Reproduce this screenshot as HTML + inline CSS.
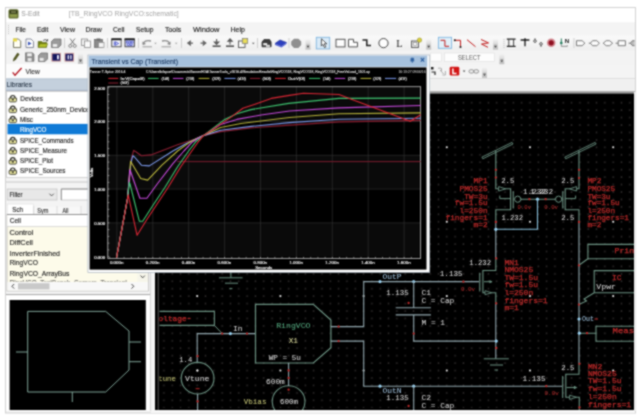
<!DOCTYPE html>
<html lang="en"><head><meta charset="utf-8"><title>S-Edit - TB_RingVCO RingVCO:schematic</title>
<style>
html,body{margin:0;padding:0;background:#fff}
body{width:640px;height:420px;overflow:hidden;position:relative}
svg{position:absolute;left:0;top:0;display:block}
text{white-space:pre}
</style></head><body>
<svg width="640" height="420" viewBox="0 0 640 420">
<defs><filter id="soft" x="0" y="0" width="640" height="420" filterUnits="userSpaceOnUse" color-interpolation-filters="sRGB"><feConvolveMatrix order="3" kernelMatrix="1 2 1 2 6 2 1 2 1" divisor="18" edgeMode="duplicate" preserveAlpha="true"/></filter></defs>
<g filter="url(#soft)"><rect width="640" height="420" fill="#ffffff"/>
<defs><linearGradient id="tbg" x1="0" y1="0" x2="0" y2="1"><stop offset="0" stop-color="#fafafa"/><stop offset="1" stop-color="#eeeeee"/></linearGradient></defs>
<rect x="5.5" y="7.5" width="630" height="405.5" fill="#f2f2f2" stroke="#d2d2d2" stroke-width="1" />
<rect x="6" y="8" width="629" height="14.5" fill="#ffffff" />
<rect x="8.5" y="9.2" width="10" height="9.3" fill="#5f6b2e" rx="1.6" />
<rect x="9.8" y="10.4" width="7.4" height="3.2" fill="#2f3418" rx="0.6" />
<rect x="9.8" y="14.3" width="7.4" height="3" fill="#8d9a4a" rx="0.6" />
<line x1="11" y1="12" x2="16" y2="12" stroke="#c9d28c" stroke-width="0.8" />
<text x="21.3" y="16.35" font-family='"Liberation Sans", sans-serif' font-size="7.2" fill="#959595" textLength="18.20" lengthAdjust="spacingAndGlyphs" >S-Edit</text>
<text x="68.8" y="16.35" font-family='"Liberation Sans", sans-serif' font-size="7.2" fill="#a4a4a4" textLength="110.00" lengthAdjust="spacingAndGlyphs" >[TB_RingVCO RingVCO:schematic]</text>
<rect x="6" y="22.5" width="629" height="13" fill="#f4f4f4" />
<rect x="8" y="25" width="1" height="1" fill="#c4c4c4" />
<rect x="8" y="27" width="1" height="1" fill="#c4c4c4" />
<rect x="8" y="29" width="1" height="1" fill="#c4c4c4" />
<rect x="8" y="31" width="1" height="1" fill="#c4c4c4" />
<rect x="8" y="33" width="1" height="1" fill="#c4c4c4" />
<text x="15.5" y="31.65" font-family='"Liberation Sans", sans-serif' font-size="7.5" fill="#1c1c1c" textLength="10.50" lengthAdjust="spacingAndGlyphs" stroke="#1c1c1c" stroke-width="0.14" >File</text>
<text x="37" y="31.65" font-family='"Liberation Sans", sans-serif' font-size="7.5" fill="#1c1c1c" textLength="11.30" lengthAdjust="spacingAndGlyphs" stroke="#1c1c1c" stroke-width="0.14" >Edit</text>
<text x="60" y="31.65" font-family='"Liberation Sans", sans-serif' font-size="7.5" fill="#1c1c1c" textLength="15.00" lengthAdjust="spacingAndGlyphs" stroke="#1c1c1c" stroke-width="0.14" >View</text>
<text x="85.5" y="31.65" font-family='"Liberation Sans", sans-serif' font-size="7.5" fill="#1c1c1c" textLength="16.20" lengthAdjust="spacingAndGlyphs" stroke="#1c1c1c" stroke-width="0.14" >Draw</text>
<text x="113" y="31.65" font-family='"Liberation Sans", sans-serif' font-size="7.5" fill="#1c1c1c" textLength="11.50" lengthAdjust="spacingAndGlyphs" stroke="#1c1c1c" stroke-width="0.14" >Cell</text>
<text x="136" y="31.65" font-family='"Liberation Sans", sans-serif' font-size="7.5" fill="#1c1c1c" textLength="17.50" lengthAdjust="spacingAndGlyphs" stroke="#1c1c1c" stroke-width="0.14" >Setup</text>
<text x="165" y="31.65" font-family='"Liberation Sans", sans-serif' font-size="7.5" fill="#1c1c1c" textLength="16.30" lengthAdjust="spacingAndGlyphs" stroke="#1c1c1c" stroke-width="0.14" >Tools</text>
<text x="193" y="31.65" font-family='"Liberation Sans", sans-serif' font-size="7.5" fill="#1c1c1c" textLength="26.50" lengthAdjust="spacingAndGlyphs" stroke="#1c1c1c" stroke-width="0.14" >Window</text>
<text x="230.5" y="31.65" font-family='"Liberation Sans", sans-serif' font-size="7.5" fill="#1c1c1c" textLength="14.50" lengthAdjust="spacingAndGlyphs" stroke="#1c1c1c" stroke-width="0.14" >Help</text>
<rect x="6" y="35.5" width="629" height="15" fill="url(#tbg)" />
<rect x="6" y="50.5" width="629" height="14" fill="#f3f3f3" />
<rect x="6" y="64.5" width="629" height="14.5" fill="#f4f4f4" />
<defs><linearGradient id="ovg" x1="0" y1="0" x2="0" y2="1"><stop offset="0" stop-color="#f1f1f1"/><stop offset="1" stop-color="#bdbdbd"/></linearGradient></defs>
<path d="M13.5,39.0 h5 l2.2,2.2 v6.3 h-7.2z" fill="#fffef2" stroke="#6b6b55" stroke-width="0.9" />
<path d="M13,38.5 h4 v3 h-4z" fill="#e7d94a" stroke="none" stroke-width="1" />
<path d="M26,39.0 h5 l2.5,2.5 v6 h-7.5z" fill="#fdfdfd" stroke="#7b7f90" stroke-width="0.9" />
<path d="M28,41.5 l3.6,2 l-3.6,2z" fill="#3a55b8" stroke="none" stroke-width="1" />
<path d="M38.2,41.5 h3.6 l1,1 h3.8 v4.8 h-8.4z" fill="#6f7d12" stroke="#4e5a0e" stroke-width="0.6" />
<path d="M39.8,43.7 h7.8 l-1.4,3.6 h-8z" fill="#b4c22c" stroke="#5c6910" stroke-width="0.5" />
<path d="M43.2,40.5 q2.4,-2 4,.2 M47.6,39.1 v1.8 h-1.8" fill="none" stroke="#333" stroke-width="0.8" />
<path d="M51.5,41.5 l2.5,-2.5 h7 v6 l-2.5,2.5 h-7z" fill="#9b9b9b" stroke="#666" stroke-width="0.7" />
<rect x="52.8" y="44" width="4.4" height="3" fill="#e9e9e9" />
<line x1="64.5" y1="38" x2="64.5" y2="48" stroke="#cfcfcf" stroke-width="1" />
<path d="M70,38.5 l4.5,6 M75,38.5 l-4.5,6" fill="none" stroke="#777" stroke-width="1" />
<circle cx="70.3" cy="45.9" r="1.5" fill="none" stroke="#777" stroke-width="0.9"/>
<circle cx="74.7" cy="45.9" r="1.5" fill="none" stroke="#777" stroke-width="0.9"/>
<rect x="81.5" y="39" width="6" height="6.5" fill="#f4f4f4" stroke="#8a8a8a" stroke-width="0.8" />
<rect x="84.5" y="41" width="6" height="6.5" fill="#fafafa" stroke="#8a8a8a" stroke-width="0.8" />
<rect x="94.5" y="39.5" width="8" height="8" fill="#8a8a8a" stroke="#666" stroke-width="0.7" />
<rect x="96.5" y="38.5" width="4" height="2" fill="#666" />
<rect x="98.5" y="42.5" width="5.5" height="5" fill="#f4f4f4" stroke="#8a8a8a" stroke-width="0.7" />
<line x1="107.5" y1="38" x2="107.5" y2="48" stroke="#cfcfcf" stroke-width="1" />
<rect x="111.8" y="38.9" width="9.3" height="7.9" fill="#f3f4fc" stroke="#2a2a2a" stroke-width="0.8" />
<rect x="111.4" y="38.5" width="10.1" height="1.7" fill="#161616" />
<path d="M115.4,41.7 v3.6 l3.3,-1.8z M114.3,41.5 v4" fill="#e6e8ff" stroke="#3a48c4" stroke-width="0.8" />
<rect x="125" y="38.9" width="9.3" height="7.9" fill="#cfd3f4" stroke="#2a2a2a" stroke-width="0.8" />
<rect x="124.6" y="38.5" width="10.1" height="1.7" fill="#161616" />
<circle cx="127.2" cy="42.1" r="1.05" fill="#eef0ff" stroke="#3340c0" stroke-width="0.75"/>
<circle cx="129.7" cy="42.1" r="1.05" fill="#eef0ff" stroke="#3340c0" stroke-width="0.75"/>
<circle cx="132.2" cy="42.1" r="1.05" fill="#eef0ff" stroke="#3340c0" stroke-width="0.75"/>
<circle cx="128.4" cy="44.7" r="1.05" fill="#eef0ff" stroke="#3340c0" stroke-width="0.75"/>
<circle cx="131" cy="44.7" r="1.05" fill="#eef0ff" stroke="#3340c0" stroke-width="0.75"/>
<line x1="138.5" y1="38" x2="138.5" y2="48" stroke="#cfcfcf" stroke-width="1" />
<path d="M143,44.5 q1,-5 8,-3.5" fill="none" stroke="#8a8a8a" stroke-width="1.3" />
<path d="M142.3,41.5 l.6,3.4 l3.2,-1z" fill="#8a8a8a" stroke="none" stroke-width="1" />
<line x1="142.5" y1="46.8" x2="152" y2="46.8" stroke="#9a9a9a" stroke-width="1" />
<path d="M154.3,42.7 h2.4 l-1.2,1.5z" fill="#999" stroke="none" stroke-width="1" />
<path d="M170,44.5 q-1,-5 -8,-3.5" fill="none" stroke="#8a8a8a" stroke-width="1.3" />
<path d="M170.7,41.5 l-.6,3.4 l-3.2,-1z" fill="#8a8a8a" stroke="none" stroke-width="1" />
<line x1="161.5" y1="46.8" x2="171" y2="46.8" stroke="#9a9a9a" stroke-width="1" />
<path d="M175,42.7 h2.4 l-1.2,1.5z" fill="#999" stroke="none" stroke-width="1" />
<line x1="181.5" y1="38" x2="181.5" y2="48" stroke="#cfcfcf" stroke-width="1" />
<path d="M193,43.1 h-4.5 M190.3,41.1 l-2.6,2 l2.6,2z" fill="#666" stroke="#666" stroke-width="1.1" />
<path d="M200.5,43.1 h4.5 M203.3,41.1 l2.6,2 l-2.6,2z" fill="#666" stroke="#666" stroke-width="1.1" />
<path d="M216.6,38.9 v4 M214.4,42.1 l2.2,2.4 l2.2,-2.4z" fill="#5a5a5a" stroke="#5a5a5a" stroke-width="1.1" />
<rect x="212.6" y="45.4" width="8" height="1.6" fill="#555" />
<path d="M230,44.5 v-4 M227.8,41.3 l2.2,-2.4 l2.2,2.4z" fill="#5a5a5a" stroke="#5a5a5a" stroke-width="1.1" />
<rect x="226" y="45.4" width="8" height="1.6" fill="#555" />
<rect x="238.5" y="41" width="6.5" height="6.5" fill="#f6f6f6" stroke="#555" stroke-width="0.9" />
<rect x="242.3" y="38.5" width="5.4" height="5" fill="#e8dc5a" stroke="#777" stroke-width="0.7" />
<path d="M252,42.7 h2.6 l-1.3,1.6z" fill="#555" stroke="none" stroke-width="1" />
<line x1="257.5" y1="38" x2="257.5" y2="48" stroke="#cfcfcf" stroke-width="1" />
<path d="M262,42.0 l2,-2.5 h5.6 l1.5,2.5 v4.8 h-9.1z" fill="#3c3c3c" stroke="#222" stroke-width="0.7" />
<rect x="263.2" y="43.1" width="4" height="2.2" fill="#eee" />
<rect x="266" y="44.8" width="4" height="2" fill="#ddd" />
<path d="M275,43.5 l5,-3.5 l6.5,2.5 l-5,3.5z" fill="#2b3fc0" stroke="#1a2a8a" stroke-width="0.6" />
<path d="M275,43.5 l6.5,2.5 l5,-3.5 v1.6 l-5,3.5 l-6.5,-2.5z" fill="#5a6ad8" stroke="none" stroke-width="1" />
<line x1="289" y1="38" x2="289" y2="48" stroke="#cfcfcf" stroke-width="1" />
<path d="M294,38.7 h4.4 l2.8,2.8 v3.6 l-2.8,2.8 h-4.4 l-2.8,-2.8 v-3.6z" fill="#8f8f8f" stroke="none" stroke-width="1" />
<rect x="305.5" y="39.6" width="5" height="10" fill="url(#ovg)" />
<path d="M306.7,46 h2.6 l-1.3,1.7z" fill="#3a3a3a" stroke="none" stroke-width="1" />
<line x1="306.7" y1="45.2" x2="309.3" y2="45.2" stroke="#555" stroke-width="0.5" />
<rect x="316.3" y="37.3" width="13.4" height="11.6" fill="#d9eaf7" stroke="#7fb4de" stroke-width="0.9" />
<path d="M321.5,38.8 l5.3,5 h-2.6 l1.7,3.1 l-1.4,.7 l-1.6,-3.2 l-1.6,1.7z" fill="#fff" stroke="#333" stroke-width="0.8" />
<rect x="336" y="39.3" width="9" height="7.6" fill="#fdfdfd" stroke="#555" stroke-width="1" />
<path d="M348.5,39.3 h5 v3 h4 v4.6 h-9z" fill="#fdfdfd" stroke="#555" stroke-width="1" />
<path d="M362.5,40.0 h4.3 v5.5 h4.2" fill="none" stroke="#222" stroke-width="1.5" />
<circle cx="383.5" cy="43.1" r="4.6" fill="#fdfdfd" stroke="#444" stroke-width="1"/>
<text x="396.3" y="46.67" font-family='"Liberation Serif", serif' font-size="10.5" fill="#222" >L</text>
<rect x="411.5" y="41" width="7" height="6.5" fill="#e6e6e6" stroke="#555" stroke-width="0.9" />
<rect x="413.4" y="42.7" width="3.4" height="3" fill="#fff" stroke="#777" stroke-width="0.5" />
<circle cx="419.5" cy="40.1" r="2.2" fill="#d9cf3a" stroke="#8a8420" stroke-width="0.5"/>
<rect x="426.2" y="39.6" width="5" height="10" fill="url(#ovg)" />
<path d="M427.4,46 h2.6 l-1.3,1.7z" fill="#3a3a3a" stroke="none" stroke-width="1" />
<line x1="427.4" y1="45.2" x2="430" y2="45.2" stroke="#555" stroke-width="0.5" />
<rect x="438.4" y="37.3" width="13.2" height="11" fill="#e1f0f9" stroke="#7fb4de" stroke-width="0.9" />
<path d="M440.5,40.3 h4.4 v6 h4.2" fill="none" stroke="#c01818" stroke-width="1" />
<path d="M454.5,40.3 h6 v6.7" fill="none" stroke="#c01818" stroke-width="1" />
<circle cx="454.8" cy="40.3" r="1" fill="#111"/>
<circle cx="460.5" cy="46.9" r="1" fill="#111"/>
<path d="M467,39.7 l8.5,7" fill="none" stroke="#c01818" stroke-width="1" />
<path d="M481,39.5 l7.5,3.4 l-7,1.2 l6.5,3.2" fill="none" stroke="#c01818" stroke-width="1" />
<rect x="493" y="39.6" width="5" height="10" fill="url(#ovg)" />
<path d="M494.2,46 h2.6 l-1.3,1.7z" fill="#3a3a3a" stroke="none" stroke-width="1" />
<line x1="494.2" y1="45.2" x2="496.8" y2="45.2" stroke="#555" stroke-width="0.5" />
<rect x="503.5" y="39" width="1" height="1" fill="#b8b8b8" />
<rect x="503.5" y="41" width="1" height="1" fill="#b8b8b8" />
<rect x="503.5" y="43" width="1" height="1" fill="#b8b8b8" />
<rect x="503.5" y="45" width="1" height="1" fill="#b8b8b8" />
<rect x="503.5" y="47" width="1" height="1" fill="#b8b8b8" />
<path d="M506.8,39.1 h8.8 M506.8,46.3 h8.8" fill="none" stroke="#222" stroke-width="1.3" />
<path d="M508.8,39.1 v7.2 M513.6,39.1 v7.2" fill="none" stroke="#333" stroke-width="0.9" />
<path d="M520.6,40.0 h8.8" fill="none" stroke="#111" stroke-width="1.4" />
<path d="M525,40.0 v6.2" fill="none" stroke="#111" stroke-width="1.3" />
<rect x="524" y="38.5" width="2" height="1.2" fill="#111" />
<circle cx="535" cy="41.1" r="1.3" fill="none" stroke="#333" stroke-width="0.8"/>
<line x1="535" y1="38.3" x2="535" y2="39.8" stroke="#333" stroke-width="0.8" />
<circle cx="541" cy="43.9" r="1.3" fill="none" stroke="#333" stroke-width="0.8"/>
<line x1="541" y1="45.2" x2="541" y2="46.9" stroke="#333" stroke-width="0.8" />
<circle cx="551.2" cy="42.8" r="4.3" fill="#d38b93"/>
<circle cx="551.2" cy="42.8" r="2.6" fill="#8e1020"/>
<text x="564.8" y="43.41" font-family='"Liberation Sans", sans-serif' font-size="6.2" fill="#1a1a1a" font-weight="bold" >N</text>
<path d="M561.3,38.5 v4.5" fill="none" stroke="#1f7a5a" stroke-width="1" />
<circle cx="561.3" cy="43.1" r="1.3" fill="#1f7a5a"/>
<path d="M561.3,44.5 v1.8 h6 v-1" fill="none" stroke="#666" stroke-width="0.7" />
<line x1="574" y1="38" x2="574" y2="48" stroke="#cfcfcf" stroke-width="1" />
<path d="M576.5,40.7 h5.6 l2.8,2.5 l-2.8,2.5 h-5.6z" fill="#fbfbfb" stroke="#666" stroke-width="0.85" />
<path d="M592.6,40.7 h4.2 l2.6,2.5 l-2.6,2.5 h-4.2 l-2.2,-2.5z M588.8,43.2 h1.6" fill="#fbfbfb" stroke="#666" stroke-width="0.85" />
<path d="M603.2,43.2 l3,-2.5 h3.4 l3,2.5 l-3,2.5 h-3.4z" fill="#fbfbfb" stroke="#666" stroke-width="0.85" />
<path d="M618.2,40.7 h7.2 v5 h-7.2z M615.6,43.2 h2.6" fill="#fbfbfb" stroke="#666" stroke-width="0.85" />
<path d="M634.5,40.7 h-2 l-2.2,2.5 l2.2,2.5 h2 M628.6,43.2 h1.6" fill="#bbb" stroke="#666" stroke-width="0.85" />
<path d="M13.2,61.1 l.7,-2.6 l3.6,-5.4 l1.7,1.1 l-3.6,5.4z" fill="#55591e" stroke="#33360f" stroke-width="0.5" />
<path d="M25.5,52.8 h7 l1.5,1.5 v7 h-8.5z" fill="#8c8c8c" stroke="#666" stroke-width="0.6" />
<rect x="27.2" y="53.3" width="4.6" height="3" fill="#f0f0f0" />
<rect x="27.6" y="58" width="4" height="3.3" fill="#e4e4e4" />
<path d="M38.5,55.5 l2.5,-2.5 h6.5 v6 l-2.5,2.5 h-6.5z" fill="#9b9b9b" stroke="#666" stroke-width="0.7" />
<rect x="39.6" y="57.9" width="4" height="3" fill="#e9e9e9" />
<rect x="51.9" y="53.3" width="8.6" height="7.8" fill="#15175e" stroke="#d8a09a" stroke-width="0.9" />
<rect x="57" y="55.1" width="1.9" height="4.2" fill="#e8e8f8" />
<rect x="65" y="53.3" width="8.6" height="7.8" fill="#15175e" stroke="#d8a09a" stroke-width="0.9" />
<rect x="67.6" y="55.1" width="1.4" height="4.2" fill="#e8e8f8" />
<rect x="70.2" y="55.1" width="1.4" height="4.2" fill="#e8e8f8" />
<rect x="78" y="53.9" width="5" height="10" fill="url(#ovg)" />
<path d="M79.2,60.3 h2.6 l-1.3,1.7z" fill="#3a3a3a" stroke="none" stroke-width="1" />
<line x1="79.2" y1="59.5" x2="81.8" y2="59.5" stroke="#555" stroke-width="0.5" />
<rect x="430.5" y="53" width="11" height="8.2" fill="#fdfdfd" stroke="#e2e2e2" stroke-width="0.6" />
<rect x="444.5" y="53" width="50" height="8.4" fill="#fdfdfd" stroke="#dedede" stroke-width="0.6" />
<text x="458" y="59.54" font-family='"Liberation Sans", sans-serif' font-size="6.6" fill="#555555" textLength="22.60" lengthAdjust="spacingAndGlyphs" >SELECT</text>
<rect x="499.3" y="54.2" width="5" height="10" fill="url(#ovg)" />
<path d="M500.5,60.6 h2.6 l-1.3,1.7z" fill="#3a3a3a" stroke="none" stroke-width="1" />
<line x1="500.5" y1="59.8" x2="503.1" y2="59.8" stroke="#555" stroke-width="0.5" />
<rect x="431" y="67" width="2.5" height="2.5" fill="#222" />
<path d="M431.5,72 h3.5 v3" fill="none" stroke="#222" stroke-width="1.2" />
<path d="M438,68.2 h3 M441.5,68.2 v3 M440,70 l3.6,4 M445.4,71 v4 h-3" fill="none" stroke="#a6a6a6" stroke-width="0.9" />
<rect x="449.7" y="66.8" width="9.6" height="8.8" fill="#d21414" rx="1.4" />
<path d="M452.9,68.6 v5 h3.6" fill="none" stroke="#fff" stroke-width="1.5" />
<path d="M462.8,70.6 h2.6 l-1.3,1.6z" fill="#444" stroke="none" stroke-width="1" />
<rect x="469" y="69.8" width="4.8" height="3.2" fill="none" stroke="#8f8f8f" stroke-width="1" rx="1.6" />
<rect x="473.8" y="69.8" width="4.8" height="3.2" fill="none" stroke="#8f8f8f" stroke-width="1" rx="1.6" />
<rect x="482" y="67.8" width="5" height="10" fill="url(#ovg)" />
<path d="M483.2,74.2 h2.6 l-1.3,1.7z" fill="#3a3a3a" stroke="none" stroke-width="1" />
<line x1="483.2" y1="73.4" x2="485.8" y2="73.4" stroke="#555" stroke-width="0.5" />
<line x1="430" y1="78.8" x2="635" y2="78.8" stroke="#d4d4d4" stroke-width="1" />
<rect x="430" y="79.5" width="205" height="12.5" fill="#fbfbfb" />
<rect x="6" y="64.5" width="148" height="346" fill="#f4f4f4" />
<rect x="6" y="64" width="82.5" height="14.8" fill="#fcfcfc" />
<path d="M12.7,72.4 l2.3,2.9 l6.6,-7.3" fill="none" stroke="#b3141f" stroke-width="1.35" />
<text x="25.6" y="74.18" font-family='"Liberation Sans", sans-serif' font-size="7.6" fill="#333" textLength="14.20" lengthAdjust="spacingAndGlyphs" stroke="#333" stroke-width="0.14" >View</text>
<rect x="6" y="78.8" width="148" height="11.6" fill="#c4d0dd" />
<line x1="6" y1="90.4" x2="154" y2="90.4" stroke="#9eacbc" stroke-width="0.9" />
<line x1="6" y1="78.8" x2="154" y2="78.8" stroke="#aebdcc" stroke-width="0.8" />
<text x="6.6" y="87.42" font-family='"Liberation Sans", sans-serif' font-size="7.4" fill="#2c3a4a" textLength="25.40" lengthAdjust="spacingAndGlyphs" stroke="#2c3a4a" stroke-width="0.14" >Libraries</text>
<rect x="6.5" y="91.4" width="147" height="86" fill="#ffffff" stroke="#c8c8c8" stroke-width="0.8" />
<line x1="6" y1="182" x2="154" y2="182" stroke="#c2c2c2" stroke-width="0.9" />
<path d="M10.5,98.2 a2.3,2.7 0 0 1 4.6,0" fill="none" stroke="#2e2e26" stroke-width="1.2" />
<path d="M9.1,98.10000000000001 h7.4 v2.5 q0,1.3 -1.3,1.3 h-4.8 q-1.3,0 -1.3,-1.3z" fill="#edeaa2" stroke="#33332a" stroke-width="0.85" />
<rect x="11.7" y="98.9" width="2.2" height="1.5" fill="#3c3c2a" />
<text x="20.3" y="100.88" font-family='"Liberation Sans", sans-serif' font-size="7" fill="#222" textLength="22.70" lengthAdjust="spacingAndGlyphs" stroke="#222" stroke-width="0.14" >Devices</text>
<path d="M10.5,108.9 a2.3,2.7 0 0 1 4.6,0" fill="none" stroke="#2e2e26" stroke-width="1.2" />
<path d="M9.1,108.80000000000001 h7.4 v2.5 q0,1.3 -1.3,1.3 h-4.8 q-1.3,0 -1.3,-1.3z" fill="#edeaa2" stroke="#33332a" stroke-width="0.85" />
<rect x="11.7" y="109.6" width="2.2" height="1.5" fill="#3c3c2a" />
<text x="20" y="111.58" font-family='"Liberation Sans", sans-serif' font-size="7" fill="#222" textLength="73.00" lengthAdjust="spacingAndGlyphs" stroke="#222" stroke-width="0.14" >Generic_250nm_Devices</text>
<path d="M10.5,119.0 a2.3,2.7 0 0 1 4.6,0" fill="none" stroke="#2e2e26" stroke-width="1.2" />
<path d="M9.1,118.9 h7.4 v2.5 q0,1.3 -1.3,1.3 h-4.8 q-1.3,0 -1.3,-1.3z" fill="#edeaa2" stroke="#33332a" stroke-width="0.85" />
<rect x="11.7" y="119.7" width="2.2" height="1.5" fill="#3c3c2a" />
<text x="20" y="121.68" font-family='"Liberation Sans", sans-serif' font-size="7" fill="#222" textLength="13.00" lengthAdjust="spacingAndGlyphs" stroke="#222" stroke-width="0.14" >Misc</text>
<rect x="7.5" y="123.9" width="146" height="10.4" fill="#0f7ad6" />
<text x="20" y="132.18" font-family='"Liberation Sans", sans-serif' font-size="7" fill="#ffffff" textLength="26.50" lengthAdjust="spacingAndGlyphs" stroke="#ffffff" stroke-width="0.14" >RingVCO</text>
<path d="M10.5,140.00000000000003 a2.3,2.7 0 0 1 4.6,0" fill="none" stroke="#2e2e26" stroke-width="1.2" />
<path d="M9.1,139.9 h7.4 v2.5 q0,1.3 -1.3,1.3 h-4.8 q-1.3,0 -1.3,-1.3z" fill="#edeaa2" stroke="#33332a" stroke-width="0.85" />
<rect x="11.7" y="140.7" width="2.2" height="1.5" fill="#3c3c2a" />
<text x="20" y="142.68" font-family='"Liberation Sans", sans-serif' font-size="7" fill="#222" textLength="53.50" lengthAdjust="spacingAndGlyphs" stroke="#222" stroke-width="0.14" >SPICE_Commands</text>
<path d="M10.5,150.20000000000002 a2.3,2.7 0 0 1 4.6,0" fill="none" stroke="#2e2e26" stroke-width="1.2" />
<path d="M9.1,150.1 h7.4 v2.5 q0,1.3 -1.3,1.3 h-4.8 q-1.3,0 -1.3,-1.3z" fill="#edeaa2" stroke="#33332a" stroke-width="0.85" />
<rect x="11.7" y="150.9" width="2.2" height="1.5" fill="#3c3c2a" />
<text x="20" y="152.88" font-family='"Liberation Sans", sans-serif' font-size="7" fill="#222" textLength="47.00" lengthAdjust="spacingAndGlyphs" stroke="#222" stroke-width="0.14" >SPICE_Measure</text>
<path d="M10.5,160.4 a2.3,2.7 0 0 1 4.6,0" fill="none" stroke="#2e2e26" stroke-width="1.2" />
<path d="M9.1,160.29999999999998 h7.4 v2.5 q0,1.3 -1.3,1.3 h-4.8 q-1.3,0 -1.3,-1.3z" fill="#edeaa2" stroke="#33332a" stroke-width="0.85" />
<rect x="11.7" y="161.1" width="2.2" height="1.5" fill="#3c3c2a" />
<text x="20" y="163.08" font-family='"Liberation Sans", sans-serif' font-size="7" fill="#222" textLength="33.00" lengthAdjust="spacingAndGlyphs" stroke="#222" stroke-width="0.14" >SPICE_Plot</text>
<path d="M10.5,170.70000000000002 a2.3,2.7 0 0 1 4.6,0" fill="none" stroke="#2e2e26" stroke-width="1.2" />
<path d="M9.1,170.6 h7.4 v2.5 q0,1.3 -1.3,1.3 h-4.8 q-1.3,0 -1.3,-1.3z" fill="#edeaa2" stroke="#33332a" stroke-width="0.85" />
<rect x="11.7" y="171.4" width="2.2" height="1.5" fill="#3c3c2a" />
<text x="20" y="173.38" font-family='"Liberation Sans", sans-serif' font-size="7" fill="#222" textLength="45.50" lengthAdjust="spacingAndGlyphs" stroke="#222" stroke-width="0.14" >SPICE_Sources</text>
<rect x="7.2" y="189" width="49.8" height="11" fill="#e8e8e8" stroke="#c6c6c6" stroke-width="0.8" />
<text x="9.6" y="197.18" font-family='"Liberation Sans", sans-serif' font-size="7.6" fill="#222" textLength="12.80" lengthAdjust="spacingAndGlyphs" stroke="#222" stroke-width="0.14" >Filter</text>
<path d="M49.4,193.7 l2.2,2.2 l2.2,-2.2" fill="none" stroke="#444" stroke-width="0.9" />
<rect x="61.3" y="189" width="92" height="11" fill="#ffffff" stroke="#c4c4c4" stroke-width="0.8" />
<path d="M61.3,200 V189 H153" fill="none" stroke="#8a8a8a" stroke-width="0.9" />
<rect x="33.6" y="206.6" width="48.5" height="7.8" fill="#f8f8f8" />
<rect x="7.2" y="204" width="26.4" height="10.5" fill="#ffffff" stroke="#dcdcdc" stroke-width="0.6" />
<text x="12.2" y="212.18" font-family='"Liberation Sans", sans-serif' font-size="7.6" fill="#222" textLength="10.90" lengthAdjust="spacingAndGlyphs" stroke="#222" stroke-width="0.14" >Sch</text>
<text x="37.2" y="213.18" font-family='"Liberation Sans", sans-serif' font-size="7" fill="#333" textLength="11.20" lengthAdjust="spacingAndGlyphs" stroke="#333" stroke-width="0.14" >Sym</text>
<text x="62.5" y="213.18" font-family='"Liberation Sans", sans-serif' font-size="7" fill="#333" textLength="5.90" lengthAdjust="spacingAndGlyphs" stroke="#333" stroke-width="0.14" >All</text>
<line x1="33.8" y1="206" x2="33.8" y2="214" stroke="#d0d0d0" stroke-width="0.7" />
<line x1="57" y1="206" x2="57" y2="214" stroke="#d0d0d0" stroke-width="0.7" />
<line x1="81" y1="206" x2="81" y2="214" stroke="#d0d0d0" stroke-width="0.7" />
<rect x="7" y="214.5" width="141.5" height="76.5" fill="#fdfbea" stroke="#b9b9b9" stroke-width="0.8" />
<rect x="7.4" y="214.9" width="140.7" height="11.4" fill="#ffffff" />
<line x1="7" y1="226.5" x2="148.5" y2="226.5" stroke="#d2d2d2" stroke-width="0.8" />
<line x1="7" y1="214.5" x2="148.5" y2="214.5" stroke="#8c8c8c" stroke-width="0.9" />
<text x="9.7" y="223.42" font-family='"Liberation Sans", sans-serif' font-size="8" fill="#222" textLength="11.30" lengthAdjust="spacingAndGlyphs" stroke="#222" stroke-width="0.14" >Cell</text>
<text x="9.5" y="234.72" font-family='"Liberation Sans", sans-serif' font-size="8" fill="#222" textLength="23.80" lengthAdjust="spacingAndGlyphs" stroke="#222" stroke-width="0.14" >Control</text>
<text x="9.5" y="245.22" font-family='"Liberation Sans", sans-serif' font-size="8" fill="#222" textLength="23.50" lengthAdjust="spacingAndGlyphs" stroke="#222" stroke-width="0.14" >DiffCell</text>
<text x="9.5" y="255.52" font-family='"Liberation Sans", sans-serif' font-size="8" fill="#222" textLength="50.50" lengthAdjust="spacingAndGlyphs" stroke="#222" stroke-width="0.14" >InverterFinished</text>
<text x="9.5" y="265.32" font-family='"Liberation Sans", sans-serif' font-size="8" fill="#222" textLength="28.50" lengthAdjust="spacingAndGlyphs" stroke="#222" stroke-width="0.14" >RingVCO</text>
<text x="9.5" y="276.02" font-family='"Liberation Sans", sans-serif' font-size="8" fill="#222" textLength="60.00" lengthAdjust="spacingAndGlyphs" stroke="#222" stroke-width="0.14" >RingVCO_ArrayBus</text>
<clipPath id="cl1"><rect x="7" y="277" width="130" height="4.6"/></clipPath>
<text x="9.5" y="284.52" font-family='"Liberation Sans", sans-serif' font-size="8" fill="#555" textLength="117.50" lengthAdjust="spacingAndGlyphs" stroke="#555" stroke-width="0.14" clip-path="url(#cl1)">RingVCO_TestBench_Corners_Transient</text>
<rect x="137.5" y="226.8" width="10.6" height="55" fill="#f6f5ea" />
<path d="M140.6,275.6 l2.1,2.2 l2.1,-2.2" fill="none" stroke="#444" stroke-width="1" />
<rect x="7.4" y="282" width="140.7" height="8.6" fill="#f8f8f8" />
<rect x="18" y="283.2" width="31.5" height="6.2" fill="#c9c9c9" />
<path d="M14.2,284 l-2.3,2.3 l2.3,2.3" fill="none" stroke="#444" stroke-width="1" />
<path d="M131.5,284 l2.3,2.3 l-2.3,2.3" fill="none" stroke="#444" stroke-width="1" />
<line x1="6" y1="294.8" x2="150" y2="294.8" stroke="#8e8e8e" stroke-width="1" />
<rect x="6" y="295.2" width="144.5" height="115.5" fill="#ffffff" />
<rect x="9.6" y="300" width="136.2" height="110" fill="#000000" />
<path d="M27.7,311.4 H105.7 L129,331 V370 L105.7,392 H27.7 Z M16,352 H27.7 M129,342 H141 M129,361.7 H141 M72.3,392 V402" fill="none" stroke="#86ada0" stroke-width="0.95" />
<line x1="150.5" y1="92" x2="150.5" y2="411" stroke="#c9c9c9" stroke-width="0.8" />
<rect x="150.8" y="79.5" width="484.2" height="13" fill="#f0f0f0" />
<line x1="154" y1="92.1" x2="635" y2="92.1" stroke="#9c9c9c" stroke-width="1.7" />
<rect x="155" y="93.4" width="479" height="316.6" fill="#000000" />
<line x1="158.2" y1="94" x2="158.2" y2="410" stroke="#6a6a6a" stroke-width="0.8" />
<defs><pattern id="dots" x="1.680" y="2.220" width="8.32" height="7.44" patternUnits="userSpaceOnUse"><circle cx="4.16" cy="3.72" r="0.8" fill="#3f3a3a"/></pattern>
<clipPath id="sc"><rect x="159.5" y="94" width="474.5" height="316"/></clipPath></defs>
<rect x="160" y="96" width="473" height="312" fill="url(#dots)" />
<g clip-path="url(#sc)">
<circle cx="197.2" cy="147.3" r="1.05" fill="#e8e8e8"/>
<circle cx="197.2" cy="221.7" r="1.05" fill="#e8e8e8"/>
<circle cx="197.2" cy="296.1" r="1.05" fill="#e8e8e8"/>
<circle cx="197.2" cy="370.5" r="1.05" fill="#e8e8e8"/>
<circle cx="280.4" cy="147.3" r="1.05" fill="#e8e8e8"/>
<circle cx="280.4" cy="221.7" r="1.05" fill="#e8e8e8"/>
<circle cx="280.4" cy="296.1" r="1.05" fill="#e8e8e8"/>
<circle cx="280.4" cy="370.5" r="1.05" fill="#e8e8e8"/>
<circle cx="363.6" cy="147.3" r="1.05" fill="#e8e8e8"/>
<circle cx="363.6" cy="221.7" r="1.05" fill="#e8e8e8"/>
<circle cx="363.6" cy="296.1" r="1.05" fill="#e8e8e8"/>
<circle cx="363.6" cy="370.5" r="1.05" fill="#e8e8e8"/>
<circle cx="446.8" cy="147.3" r="1.05" fill="#e8e8e8"/>
<circle cx="446.8" cy="221.7" r="1.05" fill="#e8e8e8"/>
<circle cx="446.8" cy="296.1" r="1.05" fill="#e8e8e8"/>
<circle cx="446.8" cy="370.5" r="1.05" fill="#e8e8e8"/>
<circle cx="530" cy="147.3" r="1.05" fill="#e8e8e8"/>
<circle cx="530" cy="221.7" r="1.05" fill="#e8e8e8"/>
<circle cx="530" cy="296.1" r="1.05" fill="#e8e8e8"/>
<circle cx="530" cy="370.5" r="1.05" fill="#e8e8e8"/>
<circle cx="613.2" cy="147.3" r="1.05" fill="#e8e8e8"/>
<circle cx="613.2" cy="221.7" r="1.05" fill="#e8e8e8"/>
<circle cx="613.2" cy="296.1" r="1.05" fill="#e8e8e8"/>
<circle cx="613.2" cy="370.5" r="1.05" fill="#e8e8e8"/>
<path d="M230.9,272 V277.8 M219,277.8 H242.6 M225,283.2 H238 M229.4,288.6 H232.4" fill="none" stroke="#6c9383" stroke-width="1" />
<path d="M158,311.4 H214.4 V325.4 H158" fill="none" stroke="#6c9383" stroke-width="1.1" />
<text x="158.6" y="320.59" font-family='"Liberation Mono", monospace' font-size="7.3" fill="#bd2a2a" textLength="28.00" lengthAdjust="spacingAndGlyphs" stroke="#bd2a2a" stroke-width="0.25">oltage</text>
<line x1="187.6" y1="318.4" x2="190.6" y2="318.4" stroke="#bd2a2a" stroke-width="1" />
<path d="M214.4,325.4 L222.2,333.6" fill="none" stroke="#6c9383" stroke-width="1" />
<path d="M197.2,362 V333.6 H255.5" fill="none" stroke="#93a9b0" stroke-width="1.1" />
<circle cx="222.2" cy="333.6" r="1.15" fill="#c22a2a"/>
<circle cx="247" cy="333.6" r="1.15" fill="#c22a2a"/>
<circle cx="230.4" cy="333.6" r="1.6" fill="#9ad2f2"/>
<text x="233" y="330.58" font-family='"Liberation Mono", monospace' font-size="7.6" fill="#e4e4e4" textLength="9.50" lengthAdjust="spacingAndGlyphs" >In</text>
<ellipse cx="197.6" cy="378.2" rx="16.4" ry="15.8" fill="none" stroke="#6c9383" stroke-width="1.1"/>
<line x1="197.6" y1="394" x2="197.6" y2="410" stroke="#93a9b0" stroke-width="1.1" />
<text x="185" y="380.78" font-family='"Liberation Mono", monospace' font-size="7.6" fill="#e4e4e4" textLength="24.40" lengthAdjust="spacingAndGlyphs" >Vtune</text>
<text x="158.2" y="380.78" font-family='"Liberation Mono", monospace' font-size="7.6" fill="#d0d07c" textLength="17.80" lengthAdjust="spacingAndGlyphs" >tune</text>
<text x="179.3" y="362.28" font-family='"Liberation Mono", monospace' font-size="7.6" fill="#e4e4e4" textLength="12.90" lengthAdjust="spacingAndGlyphs" >1.4</text>
<circle cx="197.6" cy="370.5" r="0.9" fill="#fff"/>
<line x1="195.6" y1="388.7" x2="199.6" y2="388.7" stroke="#bd2a2a" stroke-width="1" />
<circle cx="197.6" cy="356.2" r="1.15" fill="#c22a2a"/>
<circle cx="197.6" cy="401.4" r="1.15" fill="#c22a2a"/>
<path d="M255.5,304.3 H313.3 L330.9,320 V347.7 L313.3,363 H255.5 Z" fill="none" stroke="#6c9383" stroke-width="1.2" />
<text x="276.2" y="328.38" font-family='"Liberation Mono", monospace' font-size="7.6" fill="#58b487" textLength="34.30" lengthAdjust="spacingAndGlyphs" >RingVCO</text>
<text x="288.7" y="343.38" font-family='"Liberation Mono", monospace' font-size="7.6" fill="#e2e2a0" textLength="9.30" lengthAdjust="spacingAndGlyphs" >X1</text>
<text x="268.7" y="359.78" font-family='"Liberation Mono", monospace' font-size="7.6" fill="#e4e4e4" textLength="32.30" lengthAdjust="spacingAndGlyphs" >WP = 5u</text>
<ellipse cx="288.6" cy="401.6" rx="16.4" ry="15.8" fill="none" stroke="#6c9383" stroke-width="1.1"/>
<line x1="288.6" y1="363" x2="288.6" y2="386" stroke="#93a9b0" stroke-width="1.1" />
<text x="280" y="403.68" font-family='"Liberation Mono", monospace' font-size="7.6" fill="#e4e4e4" textLength="18.00" lengthAdjust="spacingAndGlyphs" >600m</text>
<text x="243.7" y="403.68" font-family='"Liberation Mono", monospace' font-size="7.6" fill="#d0d07c" textLength="22.80" lengthAdjust="spacingAndGlyphs" >Vbias</text>
<text x="266" y="384.48" font-family='"Liberation Mono", monospace' font-size="7.6" fill="#e4e4e4" textLength="18.80" lengthAdjust="spacingAndGlyphs" >600m</text>
<circle cx="288.6" cy="370.5" r="1.15" fill="#c22a2a"/>
<circle cx="288.6" cy="378" r="1.15" fill="#c22a2a"/>
<circle cx="288.6" cy="389.7" r="1.15" fill="#c22a2a"/>
<path d="M330.9,326.6 H363.7 V281.6 H478.9" fill="none" stroke="#93a9b0" stroke-width="1.1" />
<path d="M330.9,341.1 H363.7 V386.2 H562" fill="none" stroke="#93a9b0" stroke-width="1.1" />
<circle cx="338.6" cy="326.6" r="1.15" fill="#c22a2a"/>
<circle cx="338.6" cy="341.1" r="1.15" fill="#c22a2a"/>
<circle cx="380" cy="281.6" r="1.6" fill="#9ad2f2"/>
<circle cx="413.7" cy="281.6" r="1.6" fill="#9ad2f2"/>
<circle cx="380" cy="386.2" r="1.6" fill="#9ad2f2"/>
<circle cx="413.7" cy="386.2" r="1.6" fill="#9ad2f2"/>
<text x="382.4" y="278.88" font-family='"Liberation Mono", monospace' font-size="7.6" fill="#a9cdea" textLength="19.10" lengthAdjust="spacingAndGlyphs" >OutP</text>
<text x="382.4" y="393.48" font-family='"Liberation Mono", monospace' font-size="7.6" fill="#a9cdea" textLength="19.10" lengthAdjust="spacingAndGlyphs" >OutN</text>
<text x="386.3" y="294.88" font-family='"Liberation Mono", monospace' font-size="7.6" fill="#e4e4e4" textLength="22.30" lengthAdjust="spacingAndGlyphs" >1.135</text>
<text x="386.3" y="400.28" font-family='"Liberation Mono", monospace' font-size="7.6" fill="#e4e4e4" textLength="22.30" lengthAdjust="spacingAndGlyphs" >1.135</text>
<path d="M413.7,281.6 V307.8 M395.7,307.8 H430.9 M395.7,314.9 H430.9 M413.7,314.9 V341.1 H496.3" fill="none" stroke="#93a9b0" stroke-width="1.1" />
<circle cx="408.6" cy="303" r="1.15" fill="#c22a2a"/>
<circle cx="413.7" cy="333.6" r="1.15" fill="#c22a2a"/>
<text x="421.5" y="294.88" font-family='"Liberation Mono", monospace' font-size="7.6" fill="#e4e4e4" textLength="9.50" lengthAdjust="spacingAndGlyphs" >C1</text>
<text x="421.5" y="303.08" font-family='"Liberation Mono", monospace' font-size="7.6" fill="#e4e4e4" textLength="32.80" lengthAdjust="spacingAndGlyphs" >C = Cap</text>
<text x="421.5" y="325.28" font-family='"Liberation Mono", monospace' font-size="7.6" fill="#e4e4e4" textLength="23.50" lengthAdjust="spacingAndGlyphs" >M = 1</text>
<line x1="413.7" y1="386.2" x2="413.7" y2="410" stroke="#93a9b0" stroke-width="1.1" />
<circle cx="408.6" cy="406" r="1.15" fill="#c22a2a"/>
<text x="421.5" y="400.28" font-family='"Liberation Mono", monospace' font-size="7.6" fill="#e4e4e4" textLength="9.50" lengthAdjust="spacingAndGlyphs" >C2</text>
<text x="421.5" y="407.58" font-family='"Liberation Mono", monospace' font-size="7.6" fill="#e4e4e4" textLength="32.80" lengthAdjust="spacingAndGlyphs" >C = Cap</text>
<text x="439.8" y="276.18" font-family='"Liberation Mono", monospace' font-size="7.6" fill="#e4e4e4" textLength="22.80" lengthAdjust="spacingAndGlyphs" >1.135</text>
<path d="M481.9,157.1 L512.1,142.4 L513,144 L482.8,158.8 Z" fill="none" stroke="#6c9383" stroke-width="0.9" />
<path d="M495.8,150.5 V188.8 H510.6 V209.8 H495.8 V222" fill="none" stroke="#6c9383" stroke-width="1.1" />
<path d="M495.8,222 V258.3 M495.8,303.3 V358.8" fill="none" stroke="#93a9b0" stroke-width="1.1" />
<path d="M495.8,258.3 V270.5 H482.9 V292.7 H495.8 V303.3" fill="none" stroke="#6c9383" stroke-width="1.1" />
<path d="M498.6,186.6 L505.6,188.8 L498.6,191 Z" fill="#000" stroke="#6c9383" stroke-width="0.9" />
<path d="M499.8,195.6 V198.6 H510.6" fill="none" stroke="#6c9383" stroke-width="1" />
<line x1="513.2" y1="191.2" x2="513.2" y2="208.6" stroke="#6c9383" stroke-width="1.1" />
<circle cx="517.7" cy="199.2" r="3.1" fill="none" stroke="#6c9383" stroke-width="1"/>
<path d="M520.8,199.2 H555.5" fill="none" stroke="#6c9383" stroke-width="1.1" />
<circle cx="495.8" cy="169.8" r="1.15" fill="#c22a2a"/>
<circle cx="495.8" cy="177.6" r="1.15" fill="#c22a2a"/>
<circle cx="495.8" cy="222" r="1.15" fill="#c22a2a"/>
<path d="M564.8,157.1 L595.2,142.4 L596.1,144 L565.7,158.8 Z" fill="none" stroke="#6c9383" stroke-width="0.9" />
<path d="M579,150.5 V188.8 H565.2 V209.8 H579 V222 M579,363.8 V374.2 H565.8 V397.3 H579.3 V410" fill="none" stroke="#6c9383" stroke-width="1.1" />
<path d="M579,222 V363.8" fill="none" stroke="#93a9b0" stroke-width="1.1" />
<path d="M576.6,186.6 L569.6,188.8 L576.6,191 Z" fill="#000" stroke="#6c9383" stroke-width="0.9" />
<path d="M565.2,198.6 H575.6 V195.6" fill="none" stroke="#6c9383" stroke-width="1" />
<line x1="562.8" y1="191.2" x2="562.8" y2="208.6" stroke="#6c9383" stroke-width="1.1" />
<circle cx="558.6" cy="199.2" r="3.1" fill="none" stroke="#6c9383" stroke-width="1"/>
<circle cx="579" cy="169.8" r="1.15" fill="#c22a2a"/>
<circle cx="579" cy="178.1" r="1.15" fill="#c22a2a"/>
<circle cx="579" cy="222" r="1.15" fill="#c22a2a"/>
<circle cx="529.4" cy="199.2" r="1.15" fill="#c22a2a"/>
<circle cx="545.6" cy="199.2" r="1.15" fill="#c22a2a"/>
<circle cx="537.5" cy="199.2" r="1.6" fill="#9ad2f2"/>
<path d="M537.5,199.2 V229.3 H495.8" fill="none" stroke="#8cc4e0" stroke-width="1.1" />
<circle cx="495.8" cy="229.3" r="1.6" fill="#9ad2f2"/>
<text x="501.2" y="183.28" font-family='"Liberation Mono", monospace' font-size="7.6" fill="#e4e4e4" textLength="13.30" lengthAdjust="spacingAndGlyphs" >2.5</text>
<text x="561.2" y="183.28" font-family='"Liberation Mono", monospace' font-size="7.6" fill="#e4e4e4" textLength="13.20" lengthAdjust="spacingAndGlyphs" >2.5</text>
<text x="501.4" y="220.38" font-family='"Liberation Mono", monospace' font-size="7.6" fill="#e4e4e4" textLength="21.60" lengthAdjust="spacingAndGlyphs" >1.232</text>
<text x="561.2" y="220.38" font-family='"Liberation Mono", monospace' font-size="7.6" fill="#e4e4e4" textLength="13.20" lengthAdjust="spacingAndGlyphs" >2.5</text>
<text x="523" y="194.18" font-family='"Liberation Mono", monospace' font-size="7.6" fill="#e4e4e4" textLength="23.00" lengthAdjust="spacingAndGlyphs" >1.232</text>
<text x="530" y="194.18" font-family='"Liberation Mono", monospace' font-size="7.6" fill="#e4e4e4" textLength="23.00" lengthAdjust="spacingAndGlyphs" >1.232</text>
<text x="517.6" y="208.60" font-family='"Liberation Mono", monospace' font-size="5" fill="#bd2a2a" textLength="13.40" lengthAdjust="spacingAndGlyphs" >0.0v</text>
<text x="544.3" y="208.60" font-family='"Liberation Mono", monospace' font-size="5" fill="#bd2a2a" textLength="13.70" lengthAdjust="spacingAndGlyphs" >0.0v</text>
<text x="473.56" y="182.69" font-family='"Liberation Mono", monospace' font-size="7.3" fill="#bd2a2a" textLength="14.04" lengthAdjust="spacingAndGlyphs" stroke="#bd2a2a" stroke-width="0.25">MP1</text>
<text x="587.4" y="182.69" font-family='"Liberation Mono", monospace' font-size="7.3" fill="#bd2a2a" textLength="13.86" lengthAdjust="spacingAndGlyphs" stroke="#bd2a2a" stroke-width="0.25">MP2</text>
<text x="459.52" y="190.99" font-family='"Liberation Mono", monospace' font-size="7.3" fill="#bd2a2a" textLength="28.08" lengthAdjust="spacingAndGlyphs" stroke="#bd2a2a" stroke-width="0.25">PMOS25</text>
<text x="587.4" y="190.99" font-family='"Liberation Mono", monospace' font-size="7.3" fill="#bd2a2a" textLength="27.72" lengthAdjust="spacingAndGlyphs" stroke="#bd2a2a" stroke-width="0.25">PMOS25</text>
<text x="464.2" y="198.59" font-family='"Liberation Mono", monospace' font-size="7.3" fill="#bd2a2a" textLength="23.40" lengthAdjust="spacingAndGlyphs" stroke="#bd2a2a" stroke-width="0.25">TW=3u</text>
<text x="587.4" y="198.59" font-family='"Liberation Mono", monospace' font-size="7.3" fill="#bd2a2a" textLength="23.10" lengthAdjust="spacingAndGlyphs" stroke="#bd2a2a" stroke-width="0.25">TW=3u</text>
<text x="454.84" y="205.49" font-family='"Liberation Mono", monospace' font-size="7.3" fill="#bd2a2a" textLength="32.76" lengthAdjust="spacingAndGlyphs" stroke="#bd2a2a" stroke-width="0.25">fw=1.5u</text>
<text x="587.4" y="205.49" font-family='"Liberation Mono", monospace' font-size="7.3" fill="#bd2a2a" textLength="32.34" lengthAdjust="spacingAndGlyphs" stroke="#bd2a2a" stroke-width="0.25">fw=1.5u</text>
<text x="459.52" y="212.99" font-family='"Liberation Mono", monospace' font-size="7.3" fill="#bd2a2a" textLength="28.08" lengthAdjust="spacingAndGlyphs" stroke="#bd2a2a" stroke-width="0.25">l=250n</text>
<text x="587.4" y="212.99" font-family='"Liberation Mono", monospace' font-size="7.3" fill="#bd2a2a" textLength="27.72" lengthAdjust="spacingAndGlyphs" stroke="#bd2a2a" stroke-width="0.25">l=250n</text>
<text x="445.48" y="219.79" font-family='"Liberation Mono", monospace' font-size="7.3" fill="#bd2a2a" textLength="42.12" lengthAdjust="spacingAndGlyphs" stroke="#bd2a2a" stroke-width="0.25">fingers=1</text>
<text x="587.4" y="219.79" font-family='"Liberation Mono", monospace' font-size="7.3" fill="#bd2a2a" textLength="41.58" lengthAdjust="spacingAndGlyphs" stroke="#bd2a2a" stroke-width="0.25">fingers=1</text>
<text x="473.56" y="227.39" font-family='"Liberation Mono", monospace' font-size="7.3" fill="#bd2a2a" textLength="14.04" lengthAdjust="spacingAndGlyphs" stroke="#bd2a2a" stroke-width="0.25">m=2</text>
<text x="587.4" y="227.39" font-family='"Liberation Mono", monospace' font-size="7.3" fill="#bd2a2a" textLength="13.86" lengthAdjust="spacingAndGlyphs" stroke="#bd2a2a" stroke-width="0.25">m=2</text>
<line x1="479.8" y1="272.8" x2="479.8" y2="291.6" stroke="#6c9383" stroke-width="1.1" />
<path d="M484,281.7 H492" fill="none" stroke="#6c9383" stroke-width="1" />
<path d="M492.5,281.7 l-3,-1.6 v3.2z" fill="#6c9383" stroke="none" stroke-width="1" />
<path d="M485,290.7 L491.6,292.7 L485,294.7 Z" fill="#000" stroke="#6c9383" stroke-width="0.9" />
<circle cx="463.4" cy="281.7" r="1.15" fill="#c22a2a"/>
<circle cx="496.2" cy="258.3" r="1.15" fill="#c22a2a"/>
<circle cx="496.2" cy="303.3" r="1.15" fill="#c22a2a"/>
<text x="469.3" y="265.28" font-family='"Liberation Mono", monospace' font-size="7.6" fill="#e4e4e4" textLength="21.70" lengthAdjust="spacingAndGlyphs" >1.232</text>
<text x="461" y="290.70" font-family='"Liberation Mono", monospace' font-size="5" fill="#bd2a2a" textLength="14.00" lengthAdjust="spacingAndGlyphs" >0.0v</text>
<text x="504.4" y="265.19" font-family='"Liberation Mono", monospace' font-size="7.3" fill="#bd2a2a" textLength="14.40" lengthAdjust="spacingAndGlyphs" stroke="#bd2a2a" stroke-width="0.25">MN1</text>
<text x="504.4" y="271.79" font-family='"Liberation Mono", monospace' font-size="7.3" fill="#bd2a2a" textLength="28.80" lengthAdjust="spacingAndGlyphs" stroke="#bd2a2a" stroke-width="0.25">NMOS25</text>
<text x="504.4" y="279.69" font-family='"Liberation Mono", monospace' font-size="7.3" fill="#bd2a2a" textLength="33.60" lengthAdjust="spacingAndGlyphs" stroke="#bd2a2a" stroke-width="0.25">TW=1.5u</text>
<text x="504.4" y="286.89" font-family='"Liberation Mono", monospace' font-size="7.3" fill="#bd2a2a" textLength="33.60" lengthAdjust="spacingAndGlyphs" stroke="#bd2a2a" stroke-width="0.25">fw=1.5u</text>
<text x="504.4" y="294.89" font-family='"Liberation Mono", monospace' font-size="7.3" fill="#bd2a2a" textLength="28.80" lengthAdjust="spacingAndGlyphs" stroke="#bd2a2a" stroke-width="0.25">l=250n</text>
<text x="504.4" y="302.79" font-family='"Liberation Mono", monospace' font-size="7.3" fill="#bd2a2a" textLength="43.20" lengthAdjust="spacingAndGlyphs" stroke="#bd2a2a" stroke-width="0.25">fingers=1</text>
<text x="504.4" y="310.19" font-family='"Liberation Mono", monospace' font-size="7.3" fill="#bd2a2a" textLength="14.40" lengthAdjust="spacingAndGlyphs" stroke="#bd2a2a" stroke-width="0.25">m=1</text>
<path d="M483.8,358.8 H508.8 M490,365 H503 M494.5,370 H498" fill="none" stroke="#6c9383" stroke-width="1" />
<circle cx="496.3" cy="341.1" r="1.6" fill="#9ad2f2"/>
<circle cx="496.3" cy="348" r="1.15" fill="#c22a2a"/>
<line x1="562.7" y1="376" x2="562.7" y2="398" stroke="#6c9383" stroke-width="1.1" />
<path d="M566.5,387.5 H574.5" fill="none" stroke="#6c9383" stroke-width="1" />
<path d="M577.5,387.5 l-3.6,-1.7 v3.4z" fill="#6c9383" stroke="none" stroke-width="1" />
<path d="M569.6,395.2 L576.4,397.3 L569.6,399.4 Z" fill="#000" stroke="#6c9383" stroke-width="0.9" />
<circle cx="546.3" cy="386.2" r="1.15" fill="#c22a2a"/>
<circle cx="579.5" cy="363.8" r="1.15" fill="#c22a2a"/>
<circle cx="579.5" cy="407.5" r="1.15" fill="#c22a2a"/>
<text x="561.3" y="369.78" font-family='"Liberation Mono", monospace' font-size="7.6" fill="#e4e4e4" textLength="13.20" lengthAdjust="spacingAndGlyphs" >2.5</text>
<text x="522.5" y="381.08" font-family='"Liberation Mono", monospace' font-size="7.6" fill="#e4e4e4" textLength="23.00" lengthAdjust="spacingAndGlyphs" >1.135</text>
<text x="544.5" y="395.30" font-family='"Liberation Mono", monospace' font-size="5" fill="#bd2a2a" textLength="14.30" lengthAdjust="spacingAndGlyphs" >0.0v</text>
<text x="588" y="369.19" font-family='"Liberation Mono", monospace' font-size="7.3" fill="#bd2a2a" textLength="14.34" lengthAdjust="spacingAndGlyphs" stroke="#bd2a2a" stroke-width="0.25">MN2</text>
<text x="588" y="375.99" font-family='"Liberation Mono", monospace' font-size="7.3" fill="#bd2a2a" textLength="28.68" lengthAdjust="spacingAndGlyphs" stroke="#bd2a2a" stroke-width="0.25">NMOS25</text>
<text x="588" y="383.49" font-family='"Liberation Mono", monospace' font-size="7.3" fill="#bd2a2a" textLength="33.46" lengthAdjust="spacingAndGlyphs" stroke="#bd2a2a" stroke-width="0.25">TW=1.5u</text>
<text x="588" y="391.49" font-family='"Liberation Mono", monospace' font-size="7.3" fill="#bd2a2a" textLength="33.46" lengthAdjust="spacingAndGlyphs" stroke="#bd2a2a" stroke-width="0.25">fw=1.5u</text>
<text x="588" y="399.19" font-family='"Liberation Mono", monospace' font-size="7.3" fill="#bd2a2a" textLength="28.68" lengthAdjust="spacingAndGlyphs" stroke="#bd2a2a" stroke-width="0.25">l=250n</text>
<text x="588" y="406.69" font-family='"Liberation Mono", monospace' font-size="7.3" fill="#bd2a2a" textLength="43.02" lengthAdjust="spacingAndGlyphs" stroke="#bd2a2a" stroke-width="0.25">fingers=1</text>
<path d="M640,244.4 H587.9 V258.8 H640 M587.9,258.8 L578.9,265.3" fill="none" stroke="#6c9383" stroke-width="1.1" />
<circle cx="578.9" cy="265.3" r="1.15" fill="#c22a2a"/>
<text x="614.6" y="253.49" font-family='"Liberation Mono", monospace' font-size="7.3" fill="#bd2a2a" textLength="19.40" lengthAdjust="spacingAndGlyphs" stroke="#bd2a2a" stroke-width="0.25">Prin</text>
<path d="M640,270.6 H594.2 V292.8 H640 M594.2,292.8 L584,299 L586.5,301 L578.9,304.6" fill="none" stroke="#6c9383" stroke-width="1.1" />
<circle cx="578.9" cy="304.6" r="1.15" fill="#c22a2a"/>
<text x="612" y="279.79" font-family='"Liberation Mono", monospace' font-size="7.3" fill="#bd2a2a" textLength="9.50" lengthAdjust="spacingAndGlyphs" stroke="#bd2a2a" stroke-width="0.25">IC</text>
<text x="596.3" y="288.58" font-family='"Liberation Mono", monospace' font-size="7.6" fill="#e4e4e4" textLength="19.70" lengthAdjust="spacingAndGlyphs" >Vpwr</text>
<circle cx="579" cy="319" r="1.6" fill="#9ad2f2"/>
<text x="581.9" y="321.28" font-family='"Liberation Mono", monospace' font-size="7.6" fill="#a9cdea" textLength="12.10" lengthAdjust="spacingAndGlyphs" >Out</text>
<line x1="594.5" y1="319" x2="598" y2="319" stroke="#bd2a2a" stroke-width="1" />
<path d="M640,326.3 H596 V341.3 H640 M596,333.2 H579" fill="none" stroke="#6c9383" stroke-width="1.1" />
<circle cx="579.3" cy="333.2" r="1.6" fill="#9ad2f2"/>
<circle cx="587" cy="333.2" r="1.15" fill="#c22a2a"/>
<text x="612.6" y="332.79" font-family='"Liberation Mono", monospace' font-size="7.3" fill="#bd2a2a" textLength="21.40" lengthAdjust="spacingAndGlyphs" stroke="#bd2a2a" stroke-width="0.25">Meas</text>
</g>
<rect x="634" y="92" width="1.5" height="319" fill="#f6f6f6" />
<rect x="150.8" y="410" width="484.2" height="3" fill="#f6f6f6" />
<rect x="87.9" y="55" width="341.8" height="217.4" fill="#ffffff" stroke="#a9b4bf" stroke-width="0.7" />
<rect x="88.6" y="55.6" width="338.7" height="11.2" fill="#a6c1dd" />
<text x="91.4" y="63.55" font-family='"Liberation Sans", sans-serif' font-size="7.8" fill="#1d3b63" textLength="86.60" lengthAdjust="spacingAndGlyphs" stroke="#1d3b63" stroke-width="0.14" >Transient vs Cap (Transient)</text>
<path d="M411,58.2 h2.6 v2.6 h-2.6z M410.3,60.9 h4 M412.3,60.9 v2" fill="#2d5f9e" stroke="#2d5f9e" stroke-width="0.8" />
<path d="M420.8,58 l3.4,3.6 M424.2,58 l-3.4,3.6" fill="none" stroke="#2d5f9e" stroke-width="1.1" />
<rect x="89.6" y="67.4" width="336.9" height="202.2" fill="#000000" />
<rect x="107.8" y="222.87" width="312.8" height="33.78" fill="#0a0a0a" />
<rect x="107.8" y="155.31" width="312.8" height="33.78" fill="#0a0a0a" />
<rect x="107.8" y="87.75" width="312.8" height="33.78" fill="#0a0a0a" />
<line x1="116.9" y1="86.7" x2="116.9" y2="258.4" stroke="#363636" stroke-width="0.6" />
<line x1="152.8" y1="86.7" x2="152.8" y2="258.4" stroke="#363636" stroke-width="0.6" />
<line x1="188.7" y1="86.7" x2="188.7" y2="258.4" stroke="#363636" stroke-width="0.6" />
<line x1="224.6" y1="86.7" x2="224.6" y2="258.4" stroke="#363636" stroke-width="0.6" />
<line x1="260.5" y1="86.7" x2="260.5" y2="258.4" stroke="#363636" stroke-width="0.6" />
<line x1="296.4" y1="86.7" x2="296.4" y2="258.4" stroke="#363636" stroke-width="0.6" />
<line x1="332.3" y1="86.7" x2="332.3" y2="258.4" stroke="#363636" stroke-width="0.6" />
<line x1="368.2" y1="86.7" x2="368.2" y2="258.4" stroke="#363636" stroke-width="0.6" />
<line x1="404.1" y1="86.7" x2="404.1" y2="258.4" stroke="#363636" stroke-width="0.6" />
<line x1="107.8" y1="222.87" x2="420.6" y2="222.87" stroke="#363636" stroke-width="0.6" />
<line x1="107.8" y1="189.09" x2="420.6" y2="189.09" stroke="#363636" stroke-width="0.6" />
<line x1="107.8" y1="155.31" x2="420.6" y2="155.31" stroke="#363636" stroke-width="0.6" />
<line x1="107.8" y1="121.53" x2="420.6" y2="121.53" stroke="#363636" stroke-width="0.6" />
<rect x="107.8" y="86.7" width="312.8" height="171.7" fill="none" stroke="#b5b5b5" stroke-width="0.9" />
<line x1="109.72" y1="256.8" x2="109.72" y2="258.4" stroke="#bdbdbd" stroke-width="0.6" />
<line x1="116.9" y1="256.8" x2="116.9" y2="258.4" stroke="#bdbdbd" stroke-width="0.6" />
<line x1="124.08" y1="256.8" x2="124.08" y2="258.4" stroke="#bdbdbd" stroke-width="0.6" />
<line x1="131.26" y1="256.8" x2="131.26" y2="258.4" stroke="#bdbdbd" stroke-width="0.6" />
<line x1="138.44" y1="256.8" x2="138.44" y2="258.4" stroke="#bdbdbd" stroke-width="0.6" />
<line x1="145.62" y1="256.8" x2="145.62" y2="258.4" stroke="#bdbdbd" stroke-width="0.6" />
<line x1="152.8" y1="256.8" x2="152.8" y2="258.4" stroke="#bdbdbd" stroke-width="0.6" />
<line x1="159.98" y1="256.8" x2="159.98" y2="258.4" stroke="#bdbdbd" stroke-width="0.6" />
<line x1="167.16" y1="256.8" x2="167.16" y2="258.4" stroke="#bdbdbd" stroke-width="0.6" />
<line x1="174.34" y1="256.8" x2="174.34" y2="258.4" stroke="#bdbdbd" stroke-width="0.6" />
<line x1="181.52" y1="256.8" x2="181.52" y2="258.4" stroke="#bdbdbd" stroke-width="0.6" />
<line x1="188.7" y1="256.8" x2="188.7" y2="258.4" stroke="#bdbdbd" stroke-width="0.6" />
<line x1="195.88" y1="256.8" x2="195.88" y2="258.4" stroke="#bdbdbd" stroke-width="0.6" />
<line x1="203.06" y1="256.8" x2="203.06" y2="258.4" stroke="#bdbdbd" stroke-width="0.6" />
<line x1="210.24" y1="256.8" x2="210.24" y2="258.4" stroke="#bdbdbd" stroke-width="0.6" />
<line x1="217.42" y1="256.8" x2="217.42" y2="258.4" stroke="#bdbdbd" stroke-width="0.6" />
<line x1="224.6" y1="256.8" x2="224.6" y2="258.4" stroke="#bdbdbd" stroke-width="0.6" />
<line x1="231.78" y1="256.8" x2="231.78" y2="258.4" stroke="#bdbdbd" stroke-width="0.6" />
<line x1="238.96" y1="256.8" x2="238.96" y2="258.4" stroke="#bdbdbd" stroke-width="0.6" />
<line x1="246.14" y1="256.8" x2="246.14" y2="258.4" stroke="#bdbdbd" stroke-width="0.6" />
<line x1="253.32" y1="256.8" x2="253.32" y2="258.4" stroke="#bdbdbd" stroke-width="0.6" />
<line x1="260.5" y1="256.8" x2="260.5" y2="258.4" stroke="#bdbdbd" stroke-width="0.6" />
<line x1="267.68" y1="256.8" x2="267.68" y2="258.4" stroke="#bdbdbd" stroke-width="0.6" />
<line x1="274.86" y1="256.8" x2="274.86" y2="258.4" stroke="#bdbdbd" stroke-width="0.6" />
<line x1="282.04" y1="256.8" x2="282.04" y2="258.4" stroke="#bdbdbd" stroke-width="0.6" />
<line x1="289.22" y1="256.8" x2="289.22" y2="258.4" stroke="#bdbdbd" stroke-width="0.6" />
<line x1="296.4" y1="256.8" x2="296.4" y2="258.4" stroke="#bdbdbd" stroke-width="0.6" />
<line x1="303.58" y1="256.8" x2="303.58" y2="258.4" stroke="#bdbdbd" stroke-width="0.6" />
<line x1="310.76" y1="256.8" x2="310.76" y2="258.4" stroke="#bdbdbd" stroke-width="0.6" />
<line x1="317.94" y1="256.8" x2="317.94" y2="258.4" stroke="#bdbdbd" stroke-width="0.6" />
<line x1="325.12" y1="256.8" x2="325.12" y2="258.4" stroke="#bdbdbd" stroke-width="0.6" />
<line x1="332.3" y1="256.8" x2="332.3" y2="258.4" stroke="#bdbdbd" stroke-width="0.6" />
<line x1="339.48" y1="256.8" x2="339.48" y2="258.4" stroke="#bdbdbd" stroke-width="0.6" />
<line x1="346.66" y1="256.8" x2="346.66" y2="258.4" stroke="#bdbdbd" stroke-width="0.6" />
<line x1="353.84" y1="256.8" x2="353.84" y2="258.4" stroke="#bdbdbd" stroke-width="0.6" />
<line x1="361.02" y1="256.8" x2="361.02" y2="258.4" stroke="#bdbdbd" stroke-width="0.6" />
<line x1="368.2" y1="256.8" x2="368.2" y2="258.4" stroke="#bdbdbd" stroke-width="0.6" />
<line x1="375.38" y1="256.8" x2="375.38" y2="258.4" stroke="#bdbdbd" stroke-width="0.6" />
<line x1="382.56" y1="256.8" x2="382.56" y2="258.4" stroke="#bdbdbd" stroke-width="0.6" />
<line x1="389.74" y1="256.8" x2="389.74" y2="258.4" stroke="#bdbdbd" stroke-width="0.6" />
<line x1="396.92" y1="256.8" x2="396.92" y2="258.4" stroke="#bdbdbd" stroke-width="0.6" />
<line x1="404.1" y1="256.8" x2="404.1" y2="258.4" stroke="#bdbdbd" stroke-width="0.6" />
<line x1="411.28" y1="256.8" x2="411.28" y2="258.4" stroke="#bdbdbd" stroke-width="0.6" />
<line x1="107.8" y1="256.65" x2="109.4" y2="256.65" stroke="#bdbdbd" stroke-width="0.6" />
<line x1="107.8" y1="249.894" x2="109.4" y2="249.894" stroke="#bdbdbd" stroke-width="0.6" />
<line x1="107.8" y1="243.138" x2="109.4" y2="243.138" stroke="#bdbdbd" stroke-width="0.6" />
<line x1="107.8" y1="236.382" x2="109.4" y2="236.382" stroke="#bdbdbd" stroke-width="0.6" />
<line x1="107.8" y1="229.626" x2="109.4" y2="229.626" stroke="#bdbdbd" stroke-width="0.6" />
<line x1="107.8" y1="222.87" x2="109.4" y2="222.87" stroke="#bdbdbd" stroke-width="0.6" />
<line x1="107.8" y1="216.114" x2="109.4" y2="216.114" stroke="#bdbdbd" stroke-width="0.6" />
<line x1="107.8" y1="209.358" x2="109.4" y2="209.358" stroke="#bdbdbd" stroke-width="0.6" />
<line x1="107.8" y1="202.602" x2="109.4" y2="202.602" stroke="#bdbdbd" stroke-width="0.6" />
<line x1="107.8" y1="195.846" x2="109.4" y2="195.846" stroke="#bdbdbd" stroke-width="0.6" />
<line x1="107.8" y1="189.09" x2="109.4" y2="189.09" stroke="#bdbdbd" stroke-width="0.6" />
<line x1="107.8" y1="182.334" x2="109.4" y2="182.334" stroke="#bdbdbd" stroke-width="0.6" />
<line x1="107.8" y1="175.578" x2="109.4" y2="175.578" stroke="#bdbdbd" stroke-width="0.6" />
<line x1="107.8" y1="168.822" x2="109.4" y2="168.822" stroke="#bdbdbd" stroke-width="0.6" />
<line x1="107.8" y1="162.066" x2="109.4" y2="162.066" stroke="#bdbdbd" stroke-width="0.6" />
<line x1="107.8" y1="155.31" x2="109.4" y2="155.31" stroke="#bdbdbd" stroke-width="0.6" />
<line x1="107.8" y1="148.554" x2="109.4" y2="148.554" stroke="#bdbdbd" stroke-width="0.6" />
<line x1="107.8" y1="141.798" x2="109.4" y2="141.798" stroke="#bdbdbd" stroke-width="0.6" />
<line x1="107.8" y1="135.042" x2="109.4" y2="135.042" stroke="#bdbdbd" stroke-width="0.6" />
<line x1="107.8" y1="128.286" x2="109.4" y2="128.286" stroke="#bdbdbd" stroke-width="0.6" />
<line x1="107.8" y1="121.53" x2="109.4" y2="121.53" stroke="#bdbdbd" stroke-width="0.6" />
<line x1="107.8" y1="114.774" x2="109.4" y2="114.774" stroke="#bdbdbd" stroke-width="0.6" />
<line x1="107.8" y1="108.018" x2="109.4" y2="108.018" stroke="#bdbdbd" stroke-width="0.6" />
<line x1="107.8" y1="101.262" x2="109.4" y2="101.262" stroke="#bdbdbd" stroke-width="0.6" />
<line x1="107.8" y1="94.506" x2="109.4" y2="94.506" stroke="#bdbdbd" stroke-width="0.6" />
<line x1="107.8" y1="87.75" x2="109.4" y2="87.75" stroke="#bdbdbd" stroke-width="0.6" />
<text x="94.2" y="258.55" font-family='"Liberation Sans", sans-serif' font-size="4.4" fill="#f0f0f0" textLength="11.00" lengthAdjust="spacingAndGlyphs" stroke="#f0f0f0" stroke-width="0.18" >0.000</text>
<text x="94.2" y="224.77" font-family='"Liberation Sans", sans-serif' font-size="4.4" fill="#f0f0f0" textLength="11.00" lengthAdjust="spacingAndGlyphs" stroke="#f0f0f0" stroke-width="0.18" >0.500</text>
<text x="94.2" y="190.99" font-family='"Liberation Sans", sans-serif' font-size="4.4" fill="#f0f0f0" textLength="11.00" lengthAdjust="spacingAndGlyphs" stroke="#f0f0f0" stroke-width="0.18" >1.000</text>
<text x="94.2" y="157.21" font-family='"Liberation Sans", sans-serif' font-size="4.4" fill="#f0f0f0" textLength="11.00" lengthAdjust="spacingAndGlyphs" stroke="#f0f0f0" stroke-width="0.18" >1.500</text>
<text x="94.2" y="123.43" font-family='"Liberation Sans", sans-serif' font-size="4.4" fill="#f0f0f0" textLength="11.00" lengthAdjust="spacingAndGlyphs" stroke="#f0f0f0" stroke-width="0.18" >2.000</text>
<text x="94.2" y="89.65" font-family='"Liberation Sans", sans-serif' font-size="4.4" fill="#f0f0f0" textLength="11.00" lengthAdjust="spacingAndGlyphs" stroke="#f0f0f0" stroke-width="0.18" >2.500</text>
<text x="109.9" y="264.30" font-family='"Liberation Sans", sans-serif' font-size="4.4" fill="#f0f0f0" textLength="13.60" lengthAdjust="spacingAndGlyphs" stroke="#f0f0f0" stroke-width="0.15" >0.000n</text>
<text x="145.8" y="264.30" font-family='"Liberation Sans", sans-serif' font-size="4.4" fill="#f0f0f0" textLength="13.60" lengthAdjust="spacingAndGlyphs" stroke="#f0f0f0" stroke-width="0.15" >0.200n</text>
<text x="181.7" y="264.30" font-family='"Liberation Sans", sans-serif' font-size="4.4" fill="#f0f0f0" textLength="13.60" lengthAdjust="spacingAndGlyphs" stroke="#f0f0f0" stroke-width="0.15" >0.400n</text>
<text x="217.6" y="264.30" font-family='"Liberation Sans", sans-serif' font-size="4.4" fill="#f0f0f0" textLength="13.60" lengthAdjust="spacingAndGlyphs" stroke="#f0f0f0" stroke-width="0.15" >0.600n</text>
<text x="253.5" y="264.30" font-family='"Liberation Sans", sans-serif' font-size="4.4" fill="#f0f0f0" textLength="13.60" lengthAdjust="spacingAndGlyphs" stroke="#f0f0f0" stroke-width="0.15" >0.800n</text>
<text x="289.4" y="264.30" font-family='"Liberation Sans", sans-serif' font-size="4.4" fill="#f0f0f0" textLength="13.60" lengthAdjust="spacingAndGlyphs" stroke="#f0f0f0" stroke-width="0.15" >1.000n</text>
<text x="325.3" y="264.30" font-family='"Liberation Sans", sans-serif' font-size="4.4" fill="#f0f0f0" textLength="13.60" lengthAdjust="spacingAndGlyphs" stroke="#f0f0f0" stroke-width="0.15" >1.200n</text>
<text x="361.2" y="264.30" font-family='"Liberation Sans", sans-serif' font-size="4.4" fill="#f0f0f0" textLength="13.60" lengthAdjust="spacingAndGlyphs" stroke="#f0f0f0" stroke-width="0.15" >1.400n</text>
<text x="397.1" y="264.30" font-family='"Liberation Sans", sans-serif' font-size="4.4" fill="#f0f0f0" textLength="13.60" lengthAdjust="spacingAndGlyphs" stroke="#f0f0f0" stroke-width="0.15" >1.600n</text>
<text x="255.2" y="268.80" font-family='"Liberation Sans", sans-serif' font-size="4.4" fill="#f4f4f4" textLength="17.10" lengthAdjust="spacingAndGlyphs" stroke="#f4f4f4" stroke-width="0.15" >Seconds</text>
<text transform="translate(93.1,177.3) rotate(-90)" font-family='"Liberation Sans", sans-serif' font-size="4.4" fill="#ffffff" stroke="#ffffff" stroke-width="0.2" textLength="9.6" lengthAdjust="spacingAndGlyphs">Volts</text>
<text x="89.8" y="72.76" font-family='"Liberation Sans", sans-serif' font-size="4" fill="#e6e6e6" textLength="35.60" lengthAdjust="spacingAndGlyphs" font-weight="bold" >Tanner T-Spice 2016.4</text>
<text x="146" y="72.76" font-family='"Liberation Sans", sans-serif' font-size="4" fill="#ececec" textLength="224.00" lengthAdjust="spacingAndGlyphs" stroke="#ececec" stroke-width="0.1" >C:\Users\hilspoe\Documents\TannerEDA\TannerTools_v2016.4\SimulationResults\RingVCO118, RingVCO118, RingVCO118_FreeVsLoad_1101.sp</text>
<text x="398.5" y="72.76" font-family='"Liberation Sans", sans-serif' font-size="4" fill="#e6e6e6" textLength="27.00" lengthAdjust="spacingAndGlyphs" >16:13:27 09/06/16</text>
<line x1="108.3" y1="78.4" x2="118.3" y2="78.4" stroke="#dc2634" stroke-width="1" />
<text x="120.6" y="79.76" font-family='"Liberation Sans", sans-serif' font-size="4" fill="#f0f0f0" textLength="24.00" lengthAdjust="spacingAndGlyphs" stroke="#f0f0f0" stroke-width="0.15" >In:V(Cap=0f)</text>
<line x1="148" y1="78.4" x2="158.6" y2="78.4" stroke="#3fc872" stroke-width="1" />
<text x="161.4" y="79.76" font-family='"Liberation Sans", sans-serif' font-size="4" fill="#f0f0f0" textLength="7.80" lengthAdjust="spacingAndGlyphs" stroke="#f0f0f0" stroke-width="0.15" >(14f)</text>
<line x1="172.9" y1="78.4" x2="183.4" y2="78.4" stroke="#c84ade" stroke-width="1" />
<text x="186.3" y="79.76" font-family='"Liberation Sans", sans-serif' font-size="4" fill="#f0f0f0" textLength="8.00" lengthAdjust="spacingAndGlyphs" stroke="#f0f0f0" stroke-width="0.15" >(23f)</text>
<line x1="198.6" y1="78.4" x2="209.4" y2="78.4" stroke="#bdb93c" stroke-width="1" />
<text x="212.2" y="79.76" font-family='"Liberation Sans", sans-serif' font-size="4" fill="#f0f0f0" textLength="8.40" lengthAdjust="spacingAndGlyphs" stroke="#f0f0f0" stroke-width="0.15" >(32f)</text>
<line x1="224.4" y1="78.4" x2="235.6" y2="78.4" stroke="#7d9cf0" stroke-width="1" />
<text x="237.5" y="79.76" font-family='"Liberation Sans", sans-serif' font-size="4" fill="#f0f0f0" textLength="8.50" lengthAdjust="spacingAndGlyphs" stroke="#f0f0f0" stroke-width="0.15" >(41f)</text>
<line x1="250" y1="78.4" x2="260.3" y2="78.4" stroke="#8e1f33" stroke-width="1" />
<text x="262.5" y="79.76" font-family='"Liberation Sans", sans-serif' font-size="4" fill="#f0f0f0" textLength="8.50" lengthAdjust="spacingAndGlyphs" stroke="#f0f0f0" stroke-width="0.15" >(50f)</text>
<line x1="275" y1="78.4" x2="285.8" y2="78.4" stroke="#dc2634" stroke-width="1" />
<text x="288" y="79.76" font-family='"Liberation Sans", sans-serif' font-size="4" fill="#f0f0f0" textLength="17.20" lengthAdjust="spacingAndGlyphs" stroke="#f0f0f0" stroke-width="0.15" >Out:V(0f)</text>
<line x1="309" y1="78.4" x2="320.2" y2="78.4" stroke="#3fc872" stroke-width="1" />
<text x="323" y="79.76" font-family='"Liberation Sans", sans-serif' font-size="4" fill="#f0f0f0" textLength="7.60" lengthAdjust="spacingAndGlyphs" stroke="#f0f0f0" stroke-width="0.15" >(14f)</text>
<line x1="334.6" y1="78.4" x2="345.2" y2="78.4" stroke="#c84ade" stroke-width="1" />
<text x="348" y="79.76" font-family='"Liberation Sans", sans-serif' font-size="4" fill="#f0f0f0" textLength="8.30" lengthAdjust="spacingAndGlyphs" stroke="#f0f0f0" stroke-width="0.15" >(23f)</text>
<line x1="360.5" y1="78.4" x2="371.3" y2="78.4" stroke="#bdb93c" stroke-width="1" />
<text x="373.3" y="79.76" font-family='"Liberation Sans", sans-serif' font-size="4" fill="#f0f0f0" textLength="8.10" lengthAdjust="spacingAndGlyphs" stroke="#f0f0f0" stroke-width="0.15" >(32f)</text>
<line x1="385" y1="78.4" x2="396.2" y2="78.4" stroke="#7d9cf0" stroke-width="1" />
<text x="398.5" y="79.76" font-family='"Liberation Sans", sans-serif' font-size="4" fill="#f0f0f0" textLength="8.30" lengthAdjust="spacingAndGlyphs" stroke="#f0f0f0" stroke-width="0.15" >(41f)</text>
<line x1="108.3" y1="83" x2="118.3" y2="83" stroke="#8e1f33" stroke-width="1" />
<text x="120.6" y="84.46" font-family='"Liberation Sans", sans-serif' font-size="4" fill="#f0f0f0" textLength="8.20" lengthAdjust="spacingAndGlyphs" stroke="#f0f0f0" stroke-width="0.15" >(50f)</text>
<clipPath id="pc"><rect x="107.8" y="86.7" width="312.8" height="171.7"/></clipPath><g clip-path="url(#pc)" fill="none" stroke-width="1.1" stroke-linejoin="round" stroke-linecap="round">
<path d="M177.6,161.6 L420.6,161.6" stroke="#7c1c2e" stroke-width="1.0"/>
<path d="M116.6,257.2 L127.7,197.5 L131.2,160 L133.6,150.4 L135.5,151.5 L141.4,155.7 L150.9,154.9 L177.6,144.7 L194.9,139.2 L203.4,135.6 L220.6,131.6 L251,127.9 L289.4,125.1 L339,121.9 L420.7,120.4" stroke="#8e1f33"/>
<path d="M116.6,257.2 L127.7,197.5 L130.8,163 L132.8,155.7 L134.5,157 L141.4,165.2 L149.3,165.9 L172.9,151 L185.5,143.9 L195,139.3 L203.4,135.6 L220.6,130.3 L251,126.4 L289.4,122.6 L339,119.3 L420.7,118.3" stroke="#7d9cf0"/>
<path d="M116.6,257.2 L127.7,197.5 L130.6,161.4 L131.6,163 L140.7,178.5 L147.7,180.1 L161.9,165.2 L177.6,151 L188.6,143.1 L197,138.6 L203.4,135.6 L220.6,127.5 L240.9,123.5 L289.4,117.5 L339,113.8 L420.7,112.9" stroke="#bdb93c"/>
<path d="M116.6,257.2 L127.7,197.5 L129.7,169.9 L130.6,171.5 L139.9,198.2 L146.9,198.2 L157.2,184 L172.9,163.6 L183.9,151 L191.8,142.6 L198,138.2 L203.4,135.6 L220.6,124.5 L236.8,119.4 L261.1,115 L289.4,111 L339,107.9 L420.7,105.5" stroke="#c84ade"/>
<path d="M116.6,257.2 L127.7,197.5 L129.2,182.3 L130,184 L139.3,221.2 L142.7,221.2 L152.5,206 L165,187.2 L177.6,166.7 L188.6,151 L195.7,141.8 L203.4,135.6 L224.7,119.4 L236.8,113.8 L251,109.6 L288.6,103.4 L339,98.4 L420.7,98.1" stroke="#3fc872"/>
<path d="M116.6,257.2 L128.2,194.8 L137.1,235.3 L147.2,219 L168.2,187.2 L180.8,166.7 L191.8,151 L198,142.2 L203.4,135.6 L230.7,117.4 L242.9,108.3 L255,104.2 L271.2,98.4 L289.4,95.4 L303.4,93.2 L339,94.5 L352,99.5 L410.3,121.3 L420.7,114.7" stroke="#dc2634"/>
</g>
</g>
</svg>
</body></html>
